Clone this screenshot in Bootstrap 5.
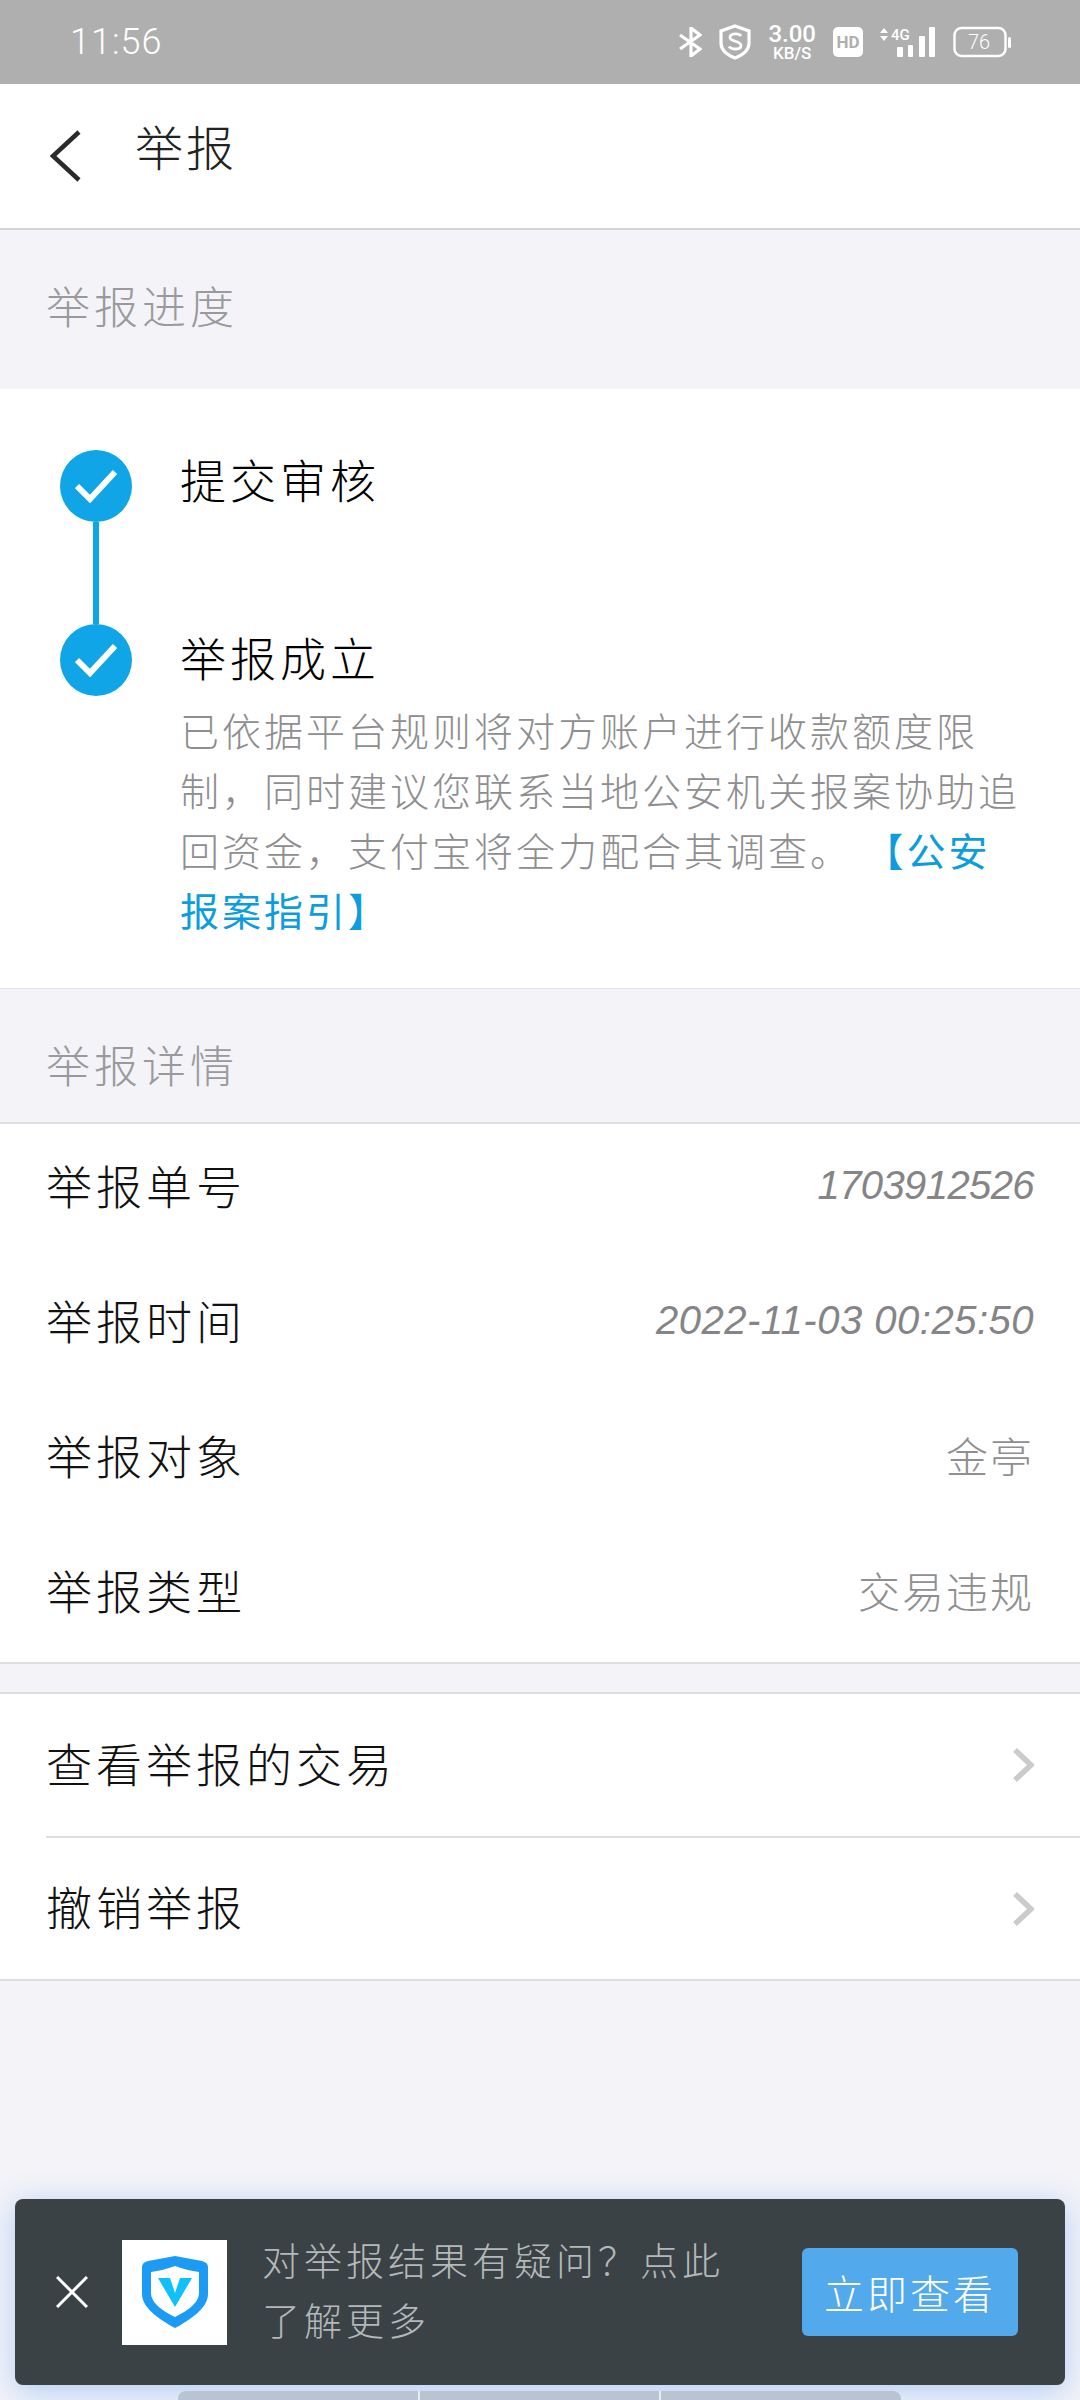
<!DOCTYPE html>
<html lang="zh-CN">
<head>
  <meta charset="UTF-8" />
  <title>举报</title>
  <meta name="viewport" content="width=device-width, initial-scale=1">
  <link href="https://cdn.jsdelivr.net/npm/bootstrap@5.3.3/dist/css/bootstrap.min.css" rel="stylesheet">
  <style>
    html, body { height: 2400px; }
    body {
      position: relative;
      overflow: hidden;
      background: #f3f3f8;
      font-family: "Noto Sans CJK SC", "Liberation Sans", sans-serif;
      font-weight: 300;
      color: #111;
    }
    .status-strip { height: 84px; background: #afafaf; color: #fff; padding: 0 69px 0 70px; }
    .status-time { font-family: "Roboto", sans-serif; font-size: 36px; letter-spacing: 1px; }
    .status-icons { gap: 17px; }
    .speed-text { font-family: "Roboto", sans-serif; text-align: center; font-weight: 500; }
    .speed-text b { display: block; font-size: 24px; line-height: 22px; font-weight: 500; }
    .speed-text i { display: block; font-size: 17px; line-height: 16px; font-style: normal; }
    .hd-chip { width: 30px; height: 30px; border-radius: 5px; background: #fff; color: #afafaf; font: 700 17px "Roboto", sans-serif; }
    .title-bar { height: 146px; background: #fff; border-bottom: 2px solid #d4d4d6; padding-left: 49px; gap: 54px; }
    .title-text { font-size: 48px; letter-spacing: 3px; color: #222; margin-bottom: 22px; }
    .sect-head { color: #9a9a9c; font-size: 44px; letter-spacing: 4px; padding-left: 46px; }
    .sect-progress { height: 159px; padding-bottom: 10px; }
    .sect-detail { height: 136px; padding-top: 16px; border-top: 1px solid #e6e6e8; border-bottom: 2px solid #dedee0; }
    .steps-box { height: 599px; background: #fff; padding: 61px 40px 0 60px; }
    .step-rail { width: 72px; flex: none; }
    .step-dot { width: 72px; height: 72px; border-radius: 50%; background: #0fa5e6; flex: none; }
    .step-line { width: 6px; height: 102px; background: #0fa5e6; }
    .step-title { font-size: 46px; letter-spacing: 4px; line-height: 64px; color: #000; margin-top: -4px; }
    .step-body { margin-top: 11px; font-size: 39px; letter-spacing: 3px; line-height: 60px; color: #8e8e90; white-space: nowrap; }
    .step-body a { color: #0c9ddd; text-decoration: none; font-weight: 400; }
    .link-open { margin-left: 32px; }
    .step-gap { height: 118px; }
    .step-text { margin-left: 48px; }
    .detail-box { height: 540px; background: #fff; border-bottom: 2px solid #dedee0; }
    .detail-row { height: 135px; padding: 0 46px 14px; }
    .row-label { font-size: 46px; letter-spacing: 4px; color: #111; }
    .row-value { font-size: 42px; letter-spacing: 2px; color: #8f8f91; }
    .row-num { font-family: "Liberation Sans", sans-serif; font-style: italic; font-size: 40px; font-weight: 400; color: #858587; }
    .row-order { letter-spacing: -.6px; }
    .row-date { letter-spacing: .5px; }
    .action-box { margin-top: 28px; background: #fff; border-top: 2px solid #dedee0; border-bottom: 2px solid #dedee0; }
    .action-row { height: 142px; margin-left: 46px; padding-right: 46px; }
    .action-row + .action-row { border-top: 2px solid #dcdcde; height: 143px; }
    .action-row .row-label { margin-bottom: 6px; }
    .promo-bar {
      position: absolute; left: 15px; top: 2199px; width: 1050px; height: 186px;
      background: #3a4245; border-radius: 8px; box-shadow: 0 6px 30px rgba(80, 150, 240, .4);
      padding: 0 47px 0 41px;
    }
    .promo-close { flex: none; }
    .promo-logo { width: 105px; height: 105px; margin-left: 34px; background: #fff; flex: none; }
    .promo-text { width: 480px; margin: -6px 0 0 35px; font-size: 38px; letter-spacing: 4px; line-height: 60px; color: #b4b8ba; }
    .promo-btn {
      width: 216px; height: 88px; margin-left: auto; padding: 0; border: 0; border-radius: 6px;
      background: #52a9ec; color: #fff; font-size: 40px; font-weight: 300; letter-spacing: 3px;
    }
    .home-pill { position: absolute; left: 178px; top: 2391px; width: 723px; height: 9px; border-radius: 8px 8px 0 0; background: #b9c3d1; }
    .home-pill span { border-left: 2px solid #e8edf5; }
    .home-pill span:first-child { border-left: 0; }
  </style>
</head>
<body>
  <!-- status bar -->
  <div class="status-strip d-flex align-items-center justify-content-between">
    <span class="status-time">11:56</span>
    <div class="status-icons d-flex align-items-center">
      <svg width="23" height="30" viewBox="0 0 23 30" fill="none" stroke="#fff" stroke-width="3.2"><path d="M1 8l20 14-9 7V1l9 7L1 22"/></svg>
      <svg width="32" height="36" viewBox="0 0 32 36" fill="none" stroke="#fff"><path stroke-width="3.2" d="M16 2l14 5v12c0 8-6 12-14 15C8 31 2 27 2 19V7z"/><path stroke-width="2.800" d="M22 12c-2-3-11-3-11 1.500s11 3 11 8-10 4-12 1"/></svg>
      <div class="speed-text"><b>3.00</b><i>KB/S</i></div>
      <div class="hd-chip d-flex align-items-center justify-content-center">HD</div>
      <svg width="56" height="30" viewBox="0 0 56 30" fill="#fff">
        <path d="M0 6l4-5 4 5zM0 9l4 5 4-5z"/>
        <text x="11" y="13" font-family="Roboto, sans-serif" font-size="15" font-weight="500">4G</text>
        <rect x="17" y="20" width="6" height="10" rx="1"/><rect x="28" y="18" width="5" height="12" rx="1"/>
        <rect x="39" y="9" width="6" height="21" rx="1"/><rect x="49" y="0" width="6" height="30" rx="1"/>
      </svg>
      <svg width="58" height="32" viewBox="0 0 58 32" fill="none">
        <rect x="1.500" y="2" width="51" height="28" rx="7" stroke="#fff" stroke-width="2.500"/>
        <rect x="55" y="11" width="3" height="11" rx="1.500" fill="#fff"/>
        <text x="26" y="23" fill="#fff" text-anchor="middle" font-family="Roboto, sans-serif" font-size="20">76</text>
      </svg>
    </div>
  </div>

  <!-- title -->
  <div class="title-bar d-flex align-items-center">
    <svg width="32" height="52" viewBox="0 0 32 52" fill="none" stroke="#2b2b2b" stroke-width="4.500"><path d="M30 2L4 26l26 24"/></svg>
    <span class="title-text">举报</span>
  </div>

  <div class="sect-head sect-progress d-flex align-items-center">举报进度</div>

  <!-- progress steps -->
  <div class="steps-box d-flex">
    <div class="step-rail d-flex flex-column align-items-center">
      <div class="step-dot d-flex align-items-center justify-content-center">
        <svg width="42" height="34" viewBox="0 0 42 34" fill="none" stroke="#fff" stroke-width="6"><path d="M2 17l13 13L40 3"/></svg>
      </div>
      <div class="step-line"></div>
      <div class="step-dot d-flex align-items-center justify-content-center">
        <svg width="42" height="34" viewBox="0 0 42 34" fill="none" stroke="#fff" stroke-width="6"><path d="M2 17l13 13L40 3"/></svg>
      </div>
    </div>
    <div class="step-text">
      <div class="step-title">提交审核</div>
      <div class="step-gap"></div>
      <div class="step-title">举报成立</div>
      <div class="step-body">已依据平台规则将对方账户进行收款额度限<br>制，同时建议您联系当地公安机关报案协助追<br>回资金，支付宝将全力配合其调查。<a class="link-open" href="#">【公安<br>报案指引】</a></div>
    </div>
  </div>

  <div class="sect-head sect-detail d-flex align-items-center">举报详情</div>

  <!-- report details -->
  <div class="detail-box">
    <div class="detail-row d-flex align-items-center justify-content-between">
      <span class="row-label">举报单号</span><span class="row-value row-num row-order">1703912526</span>
    </div>
    <div class="detail-row d-flex align-items-center justify-content-between">
      <span class="row-label">举报时间</span><span class="row-value row-num row-date">2022-11-03 00:25:50</span>
    </div>
    <div class="detail-row d-flex align-items-center justify-content-between">
      <span class="row-label">举报对象</span><span class="row-value">金亭</span>
    </div>
    <div class="detail-row d-flex align-items-center justify-content-between">
      <span class="row-label">举报类型</span><span class="row-value">交易违规</span>
    </div>
  </div>

  <!-- actions -->
  <div class="action-box">
    <div class="action-row d-flex align-items-center justify-content-between">
      <span class="row-label">查看举报的交易</span>
      <svg width="22" height="34" viewBox="0 0 22 34" fill="none" stroke="#cbcbcb" stroke-width="5.500"><path d="M3 2l16 15L3 32"/></svg>
    </div>
    <div class="action-row d-flex align-items-center justify-content-between">
      <span class="row-label">撤销举报</span>
      <svg width="22" height="34" viewBox="0 0 22 34" fill="none" stroke="#cbcbcb" stroke-width="5.500"><path d="M3 2l16 15L3 32"/></svg>
    </div>
  </div>

  <!-- promo banner over the page -->
  <div class="promo-bar d-flex align-items-center">
    <svg class="promo-close" width="32" height="32" viewBox="0 0 32 32" stroke="#fff" stroke-width="3"><path d="M1 1l30 30M31 1L1 31"/></svg>
    <div class="promo-logo d-flex align-items-center justify-content-center">
      <svg width="66" height="72" viewBox="0 0 66 72">
        <path fill="#1c9bf5" d="M33 0l27 5c4 1 6 3 6 6v27C66 53 46 65 33 72 20 65 0 53 0 38V11c0-3 2-5 6-6z"/>
        <path fill="#fff" d="M33 10c8 3 16 5 24 6v21c0 11-14 19-24 24C23 56 9 48 9 37V16c8-1 16-3 24-6z"/>
        <path fill="#0fc0fb" d="M16 22h12l5 15 5-15h12L33 51z"/>
      </svg>
    </div>
    <div class="promo-text">对举报结果有疑问？点此了解更多</div>
    <button class="promo-btn" type="button">立即查看</button>
  </div>

  <div class="home-pill d-flex overflow-hidden">
    <span class="flex-fill"></span><span class="flex-fill"></span><span class="flex-fill"></span>
  </div>

  <script src="https://cdn.jsdelivr.net/npm/bootstrap@5.3.3/dist/js/bootstrap.bundle.min.js"></script>
</body>
</html>
